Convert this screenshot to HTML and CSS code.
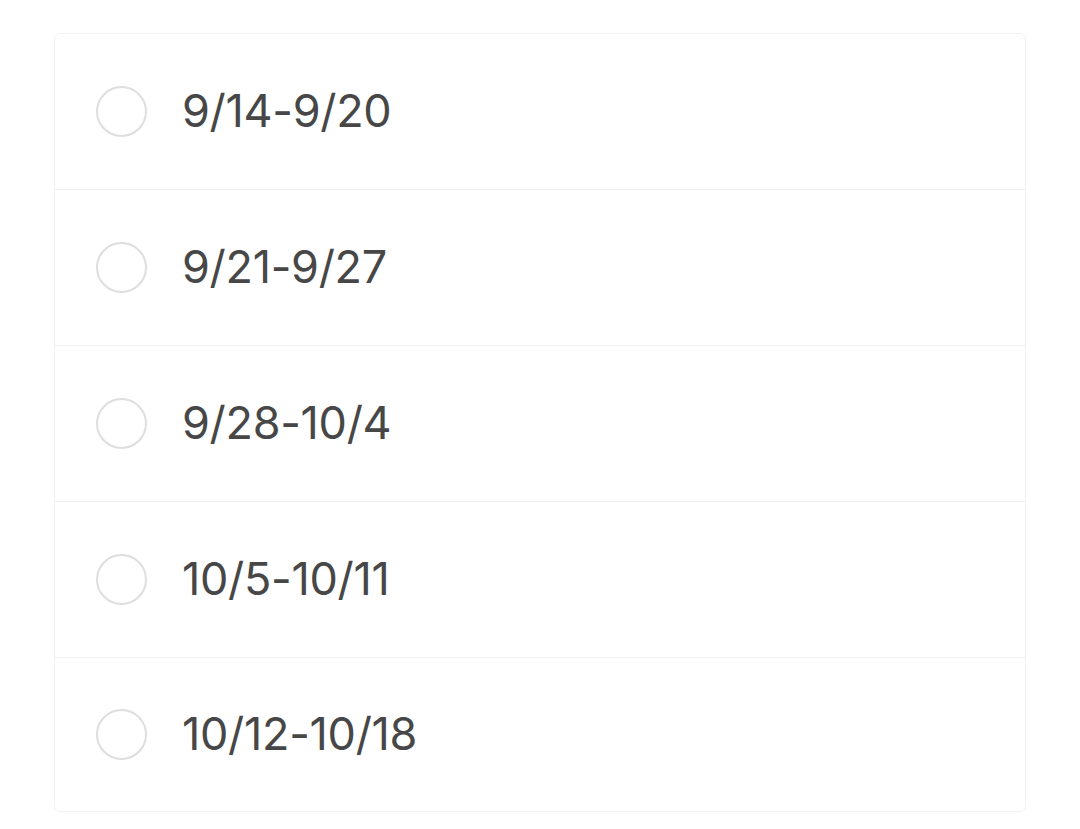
FILE: index.html
```html
<!DOCTYPE html>
<html lang="zh-CN">
<head>
  <meta charset="UTF-8" />
  <meta name="viewport" content="width=device-width, initial-scale=1" />
  <title>选择时间</title>
  <link rel="stylesheet" href="styles.css">
</head>
<body>
  <main class="choice-card">
    <label class="choice-row">
      <span class="radio"></span>
      <span class="choice-text">9/14-9/20</span>
    </label>
    <label class="choice-row">
      <span class="radio"></span>
      <span class="choice-text">9/21-9/27</span>
    </label>
    <label class="choice-row">
      <span class="radio"></span>
      <span class="choice-text">9/28-10/4</span>
    </label>
    <label class="choice-row">
      <span class="radio"></span>
      <span class="choice-text">10/5-10/11</span>
    </label>
    <label class="choice-row">
      <span class="radio"></span>
      <span class="choice-text">10/12-10/18</span>
    </label>
  </main>
</body>
</html>
```

FILE: styles.css
```css
/* Page */
body {
  margin: 0;
  background: #ffffff;
  font-family: Inter, "Noto Sans CJK SC", sans-serif;
}

/* Card holding the options */
.choice-card {
  margin: 33px 0 0 54px;
  width: 970px;
  border: 1px solid #f1f1f1;
  border-radius: 6px;
  background: #fff;
}

/* One option */
.choice-row {
  display: flex;
  align-items: center;
  height: 156px;
  padding-left: 41px;
  gap: 35px;
  border-bottom: 1px solid #f0f0f0;
  box-sizing: border-box;
}

.choice-row:last-child {
  border-bottom: none;
  height: 153px;
}

.radio {
  width: 51px;
  height: 51px;
  border: 2px solid #dedede;
  border-radius: 50%;
  box-sizing: border-box;
  flex: none;
}

.choice-text {
  font-size: 45px;
  line-height: 1;
  color: #474747;
  letter-spacing: -0.3px;
  margin-top: -3px;
}
```
